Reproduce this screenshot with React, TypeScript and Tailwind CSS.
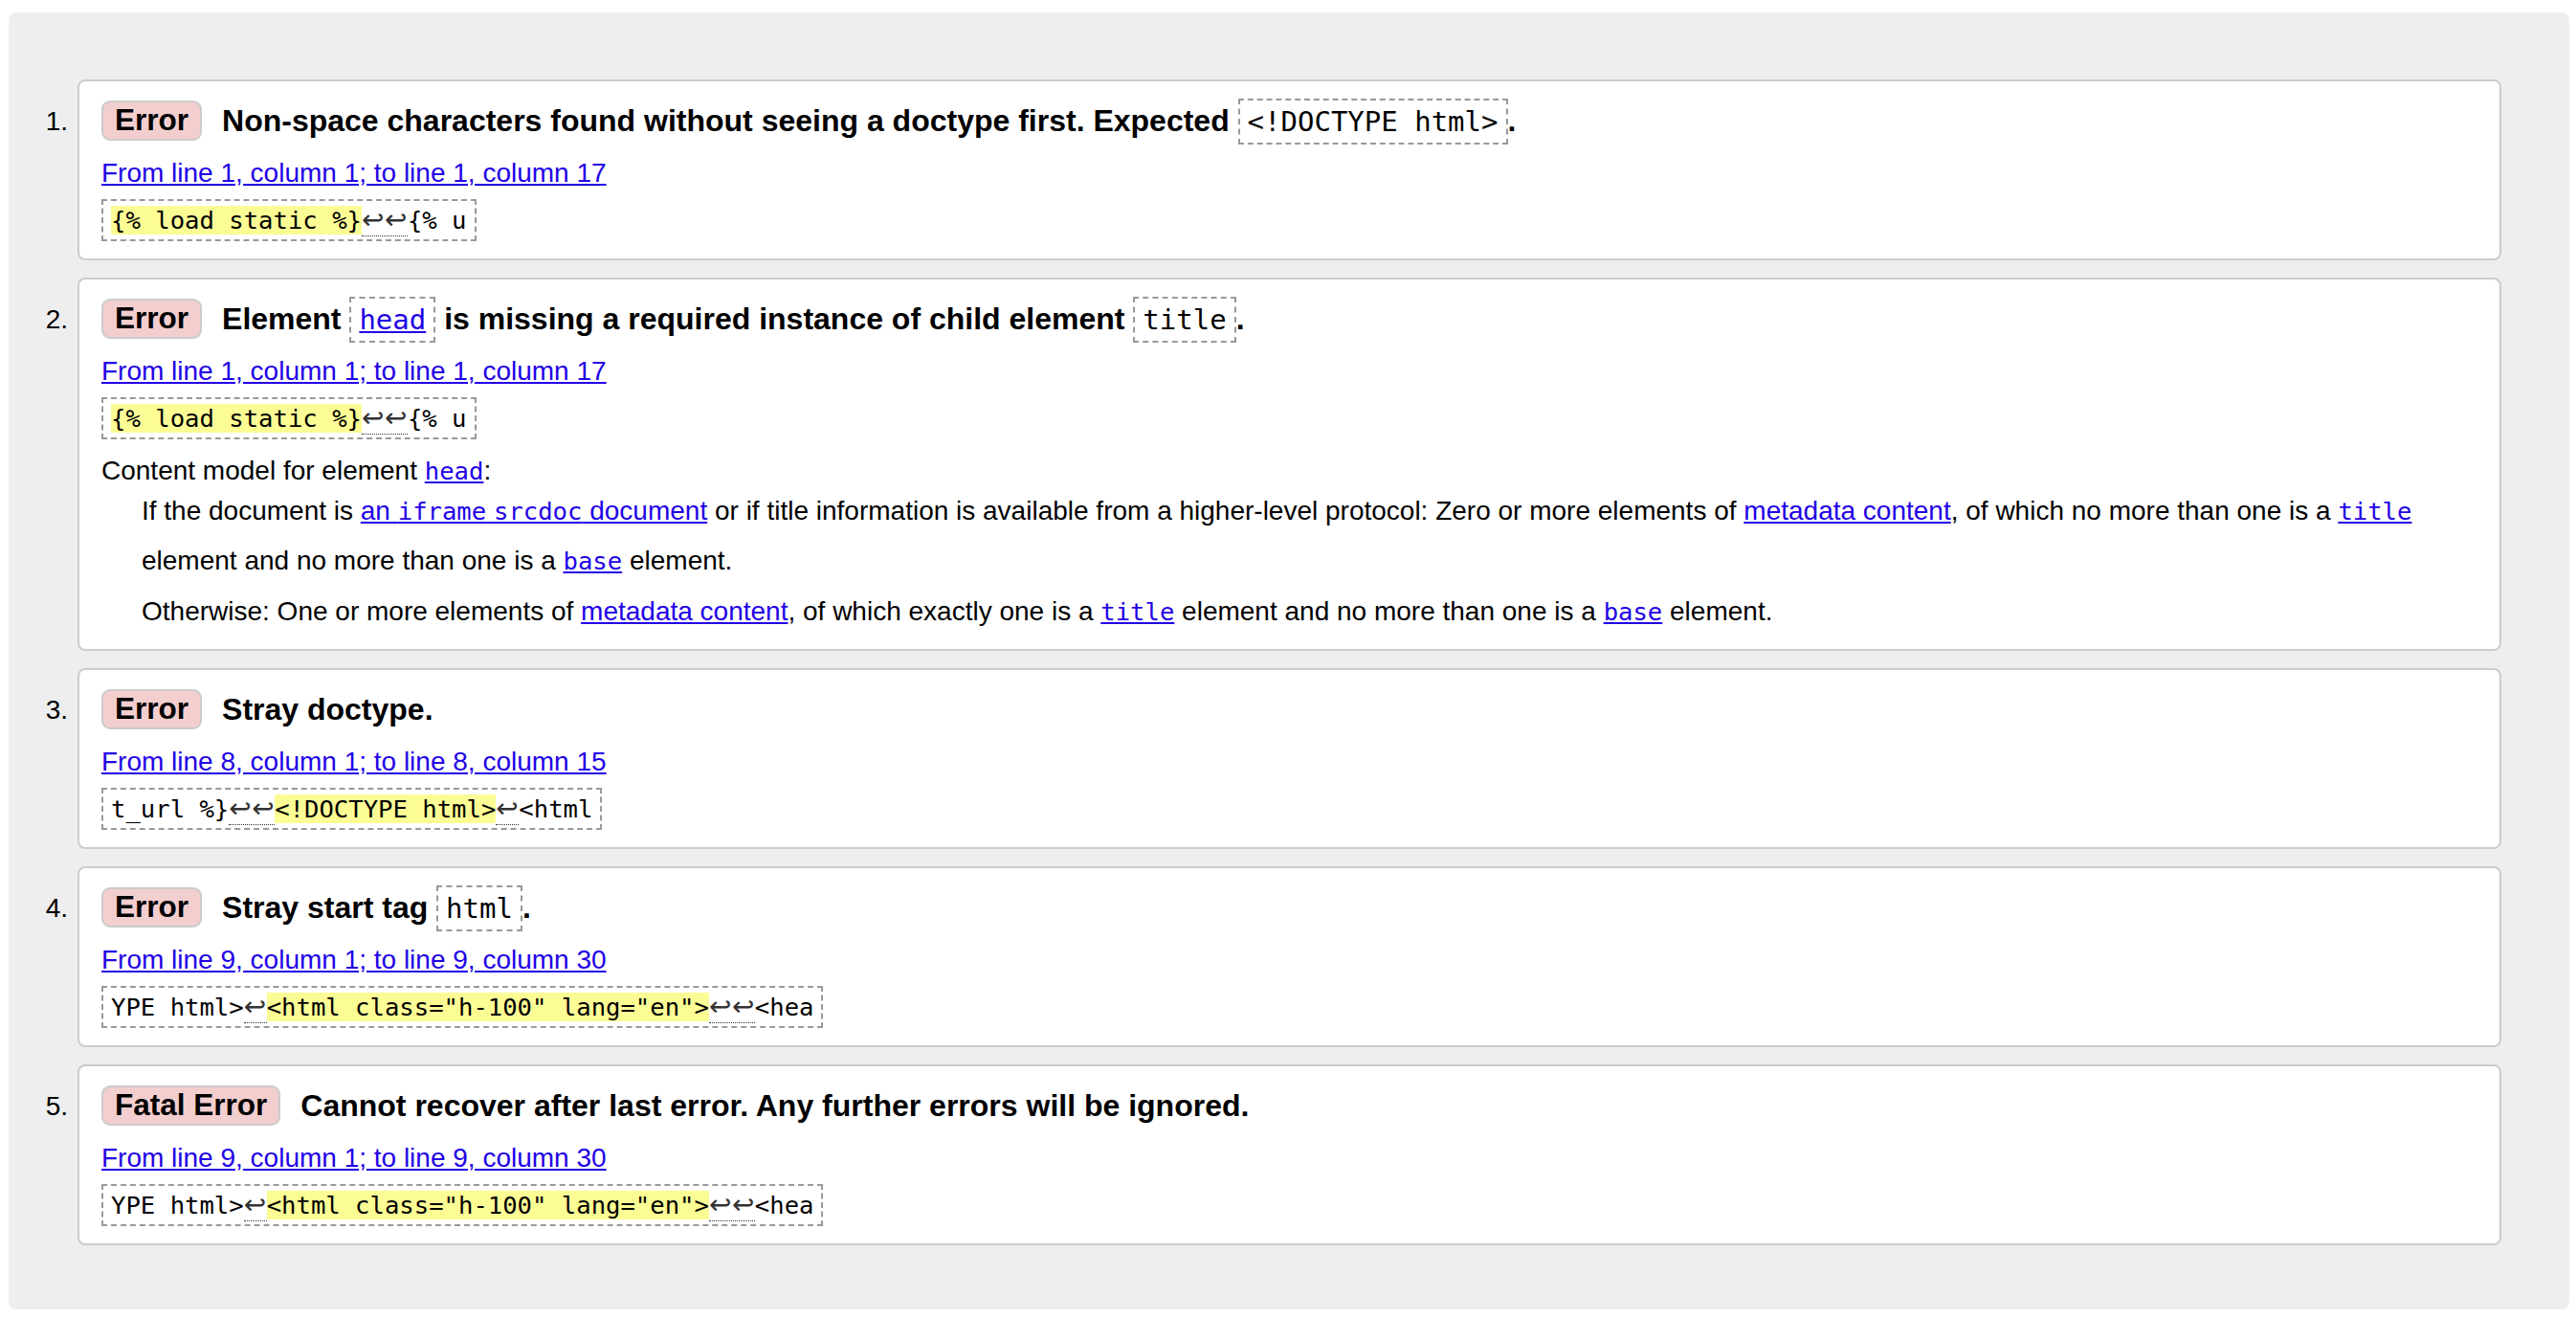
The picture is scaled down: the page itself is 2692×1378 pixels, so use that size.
import type { ReactNode } from "react";

const mono = "font-['DejaVu_Sans_Mono',monospace]";

function Badge({ label }: { label: string }) {
  return (
    <span className="inline-flex h-[42px] shrink-0 items-center rounded-[9px] border-2 border-[#ccc] bg-[#f3cece] px-[12px] text-[31.5px] leading-none font-bold">
      {label}
    </span>
  );
}

// inline code box inside the bold message line
function HCode({ children }: { children: ReactNode }) {
  return (
    <code
      className={`${mono} border-2 border-dashed border-[#999] px-[8px] py-[5px] text-[29px] leading-none font-normal`}
    >
      {children}
    </code>
  );
}

function Link({ children }: { children: ReactNode }) {
  return <a className="cursor-pointer text-[#2200e6] underline">{children}</a>;
}

function Tt({ children }: { children: ReactNode }) {
  return <code className={`${mono} text-[25.6px] leading-none`}>{children}</code>;
}

function Hl({ children }: { children: ReactNode }) {
  return <span className="bg-[#fcfc95]">{children}</span>;
}

function Lf({ n }: { n: number }) {
  return (
    <span className="border-b border-dotted border-[#333] font-['DejaVu_Sans',sans-serif] text-[28px] leading-none tracking-[0.5px] text-[#333]">
      {"↩".repeat(n)}
    </span>
  );
}

function Extract({ children }: { children: ReactNode }) {
  return (
    <div className="mt-[11px] flex">
      <div
        className={`${mono} flex h-[44px] items-center border-2 border-dashed border-[#999] px-[8px] text-[25.6px] whitespace-pre`}
      >
        <span>{children}</span>
      </div>
    </div>
  );
}

type Item = {
  kind: string;
  message: ReactNode;
  location: string;
  extract: ReactNode;
  extra?: ReactNode;
};

const items: Item[] = [
  {
    kind: "Error",
    message: (
      <>
        Non-space characters found without seeing a doctype first. Expected <HCode>{"<!DOCTYPE html>"}</HCode>.
      </>
    ),
    location: "From line 1, column 1; to line 1, column 17",
    extract: (
      <>
        <Hl>{"{% load static %}"}</Hl>
        <Lf n={2} />
        {"{% u"}
      </>
    ),
  },
  {
    kind: "Error",
    message: (
      <>
        Element{" "}
        <HCode>
          <Link>head</Link>
        </HCode>{" "}
        is missing a required instance of child element <HCode>title</HCode>.
      </>
    ),
    location: "From line 1, column 1; to line 1, column 17",
    extract: (
      <>
        <Hl>{"{% load static %}"}</Hl>
        <Lf n={2} />
        {"{% u"}
      </>
    ),
    extra: (
      <>
        <p className="mt-[17px] text-[28px] leading-[32px]">
          Content model for element{" "}
          <Link>
            <Tt>head</Tt>
          </Link>
          :
        </p>
        <div className="ml-[42px] text-[28px]">
          <p className="leading-[52px]">
            If the document is{" "}
            <Link>
              an <Tt>iframe</Tt> <Tt>srcdoc</Tt> document
            </Link>{" "}
            or if title information is available from a higher-level protocol: Zero or more elements of{" "}
            <Link>metadata content</Link>, of which no more than one is a{" "}
            <Link>
              <Tt>title</Tt>
            </Link>{" "}
            element and no more than one is a{" "}
            <Link>
              <Tt>base</Tt>
            </Link>{" "}
            element.
          </p>
          <p className="mt-[6px] leading-[42px]">
            Otherwise: One or more elements of <Link>metadata content</Link>, of which exactly one is a{" "}
            <Link>
              <Tt>title</Tt>
            </Link>{" "}
            element and no more than one is a{" "}
            <Link>
              <Tt>base</Tt>
            </Link>{" "}
            element.
          </p>
        </div>
      </>
    ),
  },
  {
    kind: "Error",
    message: <>Stray doctype.</>,
    location: "From line 8, column 1; to line 8, column 15",
    extract: (
      <>
        {"t_url %}"}
        <Lf n={2} />
        <Hl>{"<!DOCTYPE html>"}</Hl>
        <Lf n={1} />
        {"<html"}
      </>
    ),
  },
  {
    kind: "Error",
    message: (
      <>
        Stray start tag <HCode>html</HCode>.
      </>
    ),
    location: "From line 9, column 1; to line 9, column 30",
    extract: (
      <>
        {"YPE html>"}
        <Lf n={1} />
        <Hl>{'<html class="h-100" lang="en">'}</Hl>
        <Lf n={2} />
        {"<hea"}
      </>
    ),
  },
  {
    kind: "Fatal Error",
    message: <>Cannot recover after last error. Any further errors will be ignored.</>,
    location: "From line 9, column 1; to line 9, column 30",
    extract: (
      <>
        {"YPE html>"}
        <Lf n={1} />
        <Hl>{'<html class="h-100" lang="en">'}</Hl>
        <Lf n={2} />
        {"<hea"}
      </>
    ),
  },
];

export default function App() {
  return (
    <div className="min-h-screen bg-white pt-[13px] pr-[7px] pl-[9px] font-['Liberation_Sans',Arial,sans-serif] text-black">
      <div className="rounded-lg bg-[#eee] pt-[70px] pr-[71px] pb-[67px]">
        <ol className="flex flex-col gap-[18.5px]">
          {items.map((item, i) => (
            <li key={i} className="flex">
              <div className="w-[72px] shrink-0 pt-[28px] pr-[10px] text-right text-[28px] leading-[32px]">
                {i + 1}.
              </div>
              <div className="min-w-0 flex-1 rounded-lg border-2 border-[#ccc] bg-white pt-[17px] pr-[23px] pb-[17.5px] pl-[23px]">
                <div className="flex h-[48px] items-center">
                  <Badge label={item.kind} />
                  <div className="ml-[21px] text-[32px] leading-[36px] font-bold whitespace-nowrap">
                    {item.message}
                  </div>
                </div>
                <p className="mt-[15px] text-[28px] leading-[32px]">
                  <Link>{item.location}</Link>
                </p>
                <Extract>{item.extract}</Extract>
                {item.extra}
              </div>
            </li>
          ))}
        </ol>
      </div>
    </div>
  );
}
